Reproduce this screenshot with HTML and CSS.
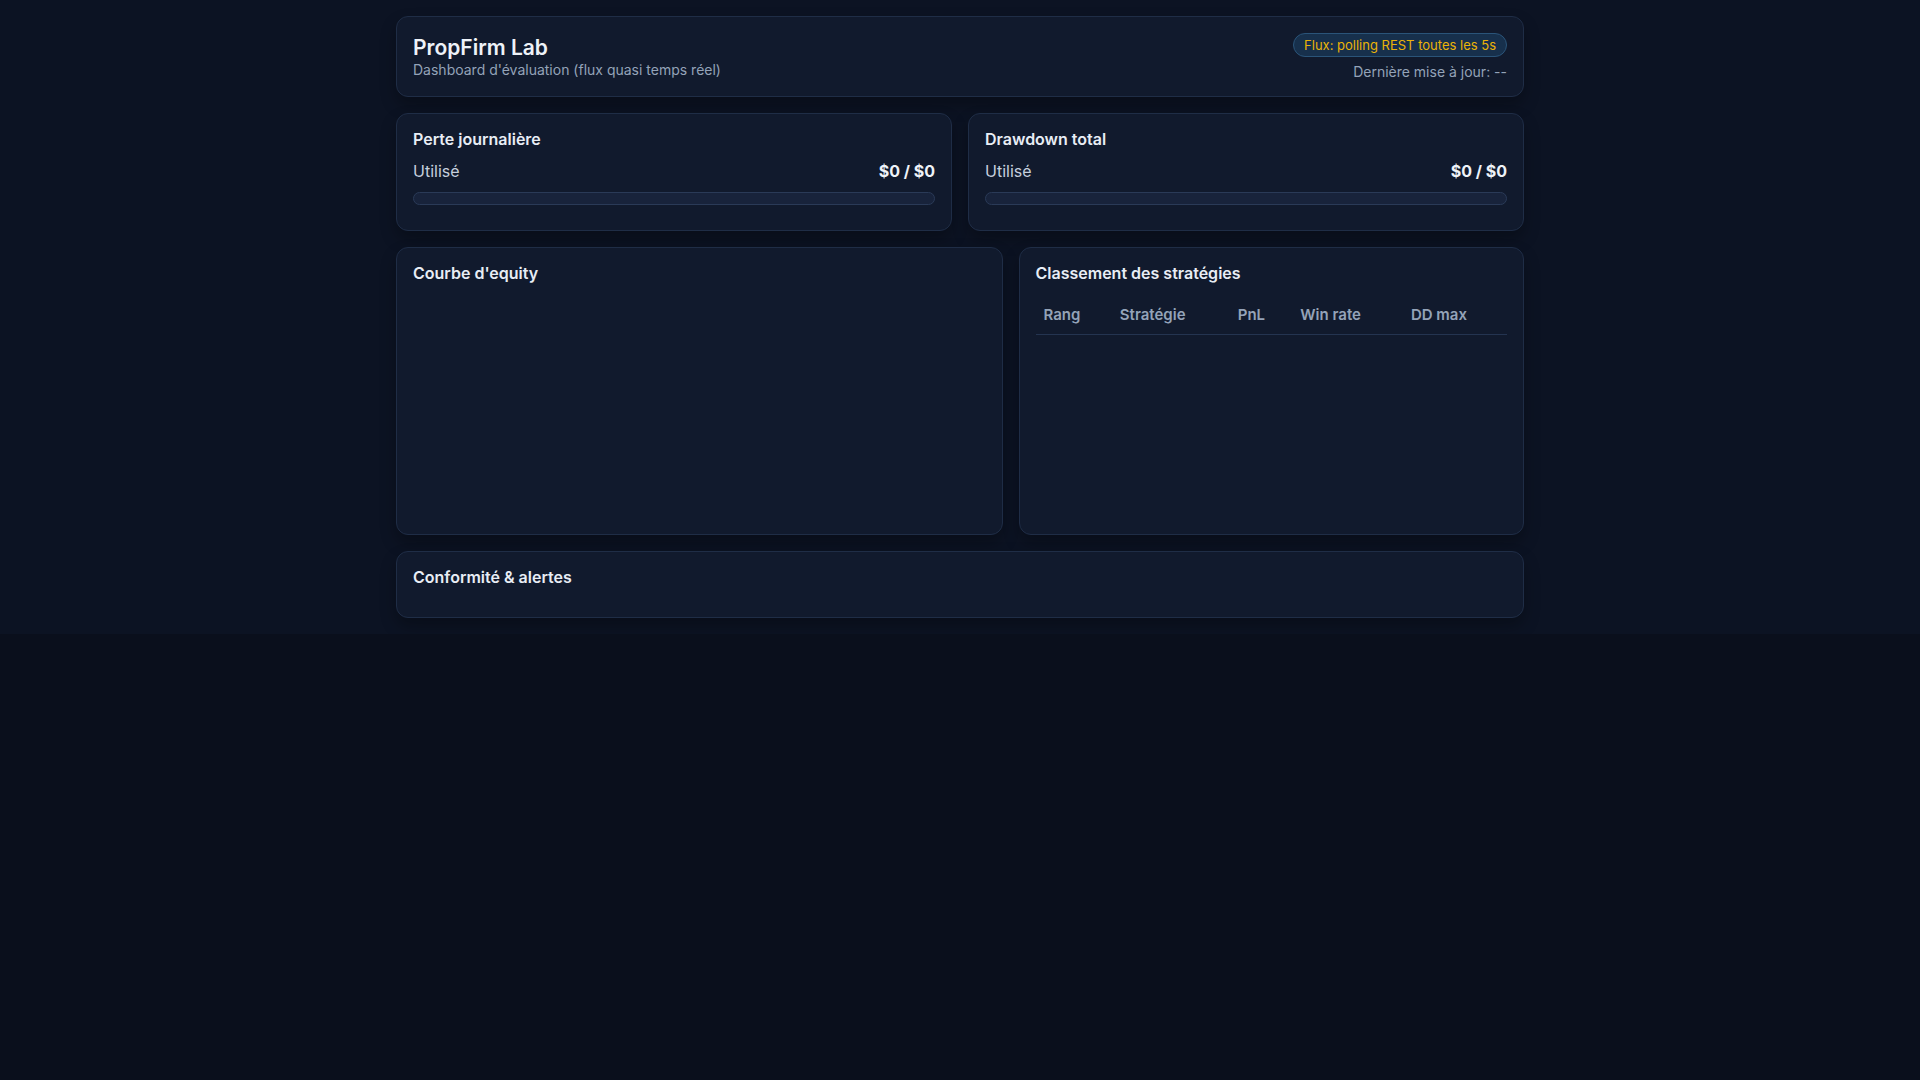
FILE: index.html
```html
<!DOCTYPE html>
<html lang="fr">
<head>
  <meta charset="UTF-8">
  <meta name="viewport" content="width=device-width, initial-scale=1.0">
  <title>PropFirm Lab</title>
  <link rel="stylesheet" href="styles.css">
</head>
<body>
  <div class="wrap">
    <!-- Header -->
    <div class="card header">
      <div class="brand">
        <h1>PropFirm Lab</h1>
        <div class="subtitle">Dashboard d'évaluation (flux quasi temps réel)</div>
      </div>
      <div class="status">
        <span class="badge">Flux: polling REST toutes les 5s</span>
        <div class="updated">Dernière mise à jour: <span id="last-update">--</span></div>
      </div>
    </div>

    <!-- Limites -->
    <div class="row row-2">
      <div class="card">
        <h3>Perte journalière</h3>
        <div class="usage">
          <span class="label">Utilisé</span>
          <span class="value" id="daily-value">$0 / $0</span>
        </div>
        <div class="bar"><div class="fill" id="daily-fill" style="width: 0%"></div></div>
      </div>
      <div class="card">
        <h3>Drawdown total</h3>
        <div class="usage">
          <span class="label">Utilisé</span>
          <span class="value" id="dd-value">$0 / $0</span>
        </div>
        <div class="bar"><div class="fill" id="dd-fill" style="width: 0%"></div></div>
      </div>
    </div>

    <!-- Equity + classement -->
    <div class="row row-main">
      <div class="card">
        <h3>Courbe d'equity</h3>
        <div class="chart" id="equity-chart"></div>
      </div>
      <div class="card">
        <h3>Classement des stratégies</h3>
        <table class="ranking">
          <thead>
            <tr>
              <th>Rang</th>
              <th>Stratégie</th>
              <th>PnL</th>
              <th>Win rate</th>
              <th>DD max</th>
            </tr>
          </thead>
          <tbody id="ranking-body"></tbody>
        </table>
      </div>
    </div>

    <!-- Alertes -->
    <div class="card">
      <h3>Conformité &amp; alertes</h3>
      <ul class="alerts" id="alerts"></ul>
    </div>
  </div>
</body>
</html>
```

FILE: styles.css
```css
html {
  background-color: #0a0f1c;
}
body {
  margin: 0;
  padding: 0;
  background-color: #0c1323;
  color: #e2e8f0;
  font-family: Inter, "Noto Sans", Arial, sans-serif;
}
.wrap {
  max-width: 1128px;
  margin: 0 auto;
  padding: 16px;
  display: flex;
  flex-direction: column;
  gap: 16px;
}
.card {
  background-color: #111a2d;
  border: 1px solid #1f2d46;
  border-radius: 12px;
  padding: 16px;
  box-shadow: 0 8px 16px rgba(0, 0, 0, 0.28);
}
.card h3 {
  margin: 0 0 12px;
  font-size: 16px;
  font-weight: 600;
  line-height: 19px;
  color: #e8edf5;
}
.header {
  display: flex;
  justify-content: space-between;
  align-items: center;
}
.header h1 {
  margin: 0;
  font-size: 21px;
  font-weight: 600;
  line-height: 25px;
  color: #eef2f8;
}
.subtitle {
  margin-top: 1px;
  font-size: 14px;
  line-height: 17px;
  color: #94a3b8;
}
.status {
  display: flex;
  flex-direction: column;
  align-items: flex-end;
  gap: 6px;
}
.badge {
  font-size: 13px;
  line-height: 16px;
  padding: 3px 10px;
  border-radius: 999px;
  background-color: #17304c;
  border: 1px solid #2a5479;
  color: #eab308;
}
.updated {
  font-size: 14px;
  line-height: 17px;
  color: #94a3b8;
}
.row {
  display: grid;
  gap: 16px;
}
.row-2 {
  grid-template-columns: 1fr 1fr;
}
.row-main {
  grid-template-columns: 1.2fr 1fr;
}
.usage {
  display: flex;
  justify-content: space-between;
  align-items: center;
  font-size: 16px;
  line-height: 20px;
  margin-top: 12px;
}
.usage .label {
  color: #c5cfdd;
}
.usage .value {
  font-weight: 700;
  color: #eef2f8;
}
.bar {
  box-sizing: border-box;
  height: 13px;
  margin: 11px 0 9px;
  background-color: #18233b;
  border: 1px solid #2a3a57;
  border-radius: 999px;
  overflow: hidden;
}
.bar .fill {
  height: 100%;
  background-color: #3b82f6;
}
.chart {
  height: 223px;
}
.ranking {
  width: 100%;
  border-collapse: collapse;
  font-size: 15px;
  line-height: 18px;
}
.ranking th {
  text-align: left;
  font-weight: 600;
  color: #94a3b8;
  padding: 11px 8px 10px;
  border-bottom: 1px solid #243450;
}
.alerts {
  list-style: none;
  margin: 0;
  padding: 0;
  min-height: 2px;
}
```
